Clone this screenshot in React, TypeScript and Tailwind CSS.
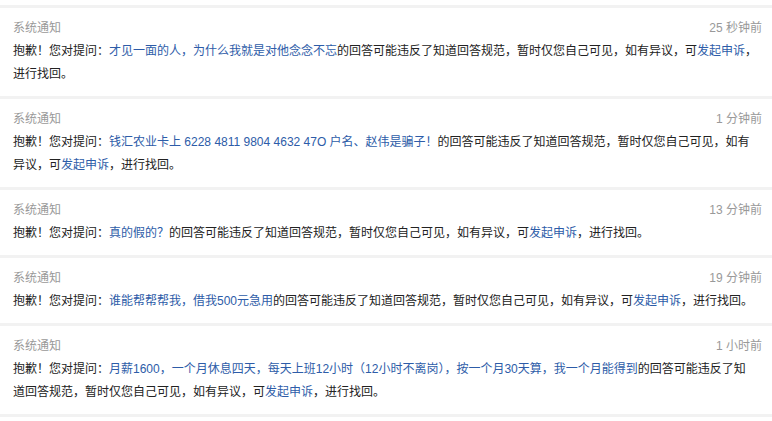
import React from "react";

type Seg = { t: string; link?: boolean };
type Item = { time: string; lines: Seg[][] };

const items: Item[] = [
  {
    time: "25 秒钟前",
    lines: [
      [
        { t: "抱歉！您对提问：" },
        { t: "才见一面的人，为什么我就是对他念念不忘", link: true },
        { t: "的回答可能违反了知道回答规范，暂时仅您自己可见，如有异议，可" },
        { t: "发起申诉", link: true },
        { t: "，" },
      ],
      [{ t: "进行找回。" }],
    ],
  },
  {
    time: "1 分钟前",
    lines: [
      [
        { t: "抱歉！您对提问：" },
        { t: "钱汇农业卡上 6228 4811 9804 4632 47O 户名、赵伟是骗子！", link: true },
        { t: "的回答可能违反了知道回答规范，暂时仅您自己可见，如有" },
      ],
      [{ t: "异议，可" }, { t: "发起申诉", link: true }, { t: "，进行找回。" }],
    ],
  },
  {
    time: "13 分钟前",
    lines: [
      [
        { t: "抱歉！您对提问：" },
        { t: "真的假的？", link: true },
        { t: "的回答可能违反了知道回答规范，暂时仅您自己可见，如有异议，可" },
        { t: "发起申诉", link: true },
        { t: "，进行找回。" },
      ],
    ],
  },
  {
    time: "19 分钟前",
    lines: [
      [
        { t: "抱歉！您对提问：" },
        { t: "谁能帮帮帮我，借我500元急用", link: true },
        { t: "的回答可能违反了知道回答规范，暂时仅您自己可见，如有异议，可" },
        { t: "发起申诉", link: true },
        { t: "，进行找回。" },
      ],
    ],
  },
  {
    time: "1 小时前",
    lines: [
      [
        { t: "抱歉！您对提问：" },
        {
          t: "月薪1600，一个月休息四天，每天上班12小时（12小时不离岗），按一个月30天算，我一个月能得到",
          link: true,
        },
        { t: "的回答可能违反了知" },
      ],
      [
        { t: "道回答规范，暂时仅您自己可见，如有异议，可" },
        { t: "发起申诉", link: true },
        { t: "，进行找回。" },
      ],
    ],
  },
];

function Sep() {
  return <div className="h-[3px] bg-[#f2f2f2]" />;
}

export default function App() {
  return (
    <div
      className="w-[772px] h-[421px] overflow-hidden bg-white text-[12px] leading-[23px] text-[#222]"
      style={{ fontFamily: '"Liberation Sans", "Noto Sans CJK SC", sans-serif' }}
    >
      <div className="h-[5px]" />
      <Sep />
      {items.map((it, i) => (
        <React.Fragment key={i}>
          <div className="pt-[9px] pb-[10px] pl-[13px] pr-[10px]">
            <div className="flex justify-between text-[#999]">
              <span>系统通知</span>
              <span>{it.time}</span>
            </div>
            {it.lines.map((ln, j) => (
              <div key={j} className="whitespace-nowrap">
                {ln.map((s, k) =>
                  s.link ? (
                    <a key={k} className="text-[#2d5ca8] cursor-pointer">
                      {s.t}
                    </a>
                  ) : (
                    <span key={k}>{s.t}</span>
                  )
                )}
              </div>
            ))}
          </div>
          <Sep />
        </React.Fragment>
      ))}
    </div>
  );
}
